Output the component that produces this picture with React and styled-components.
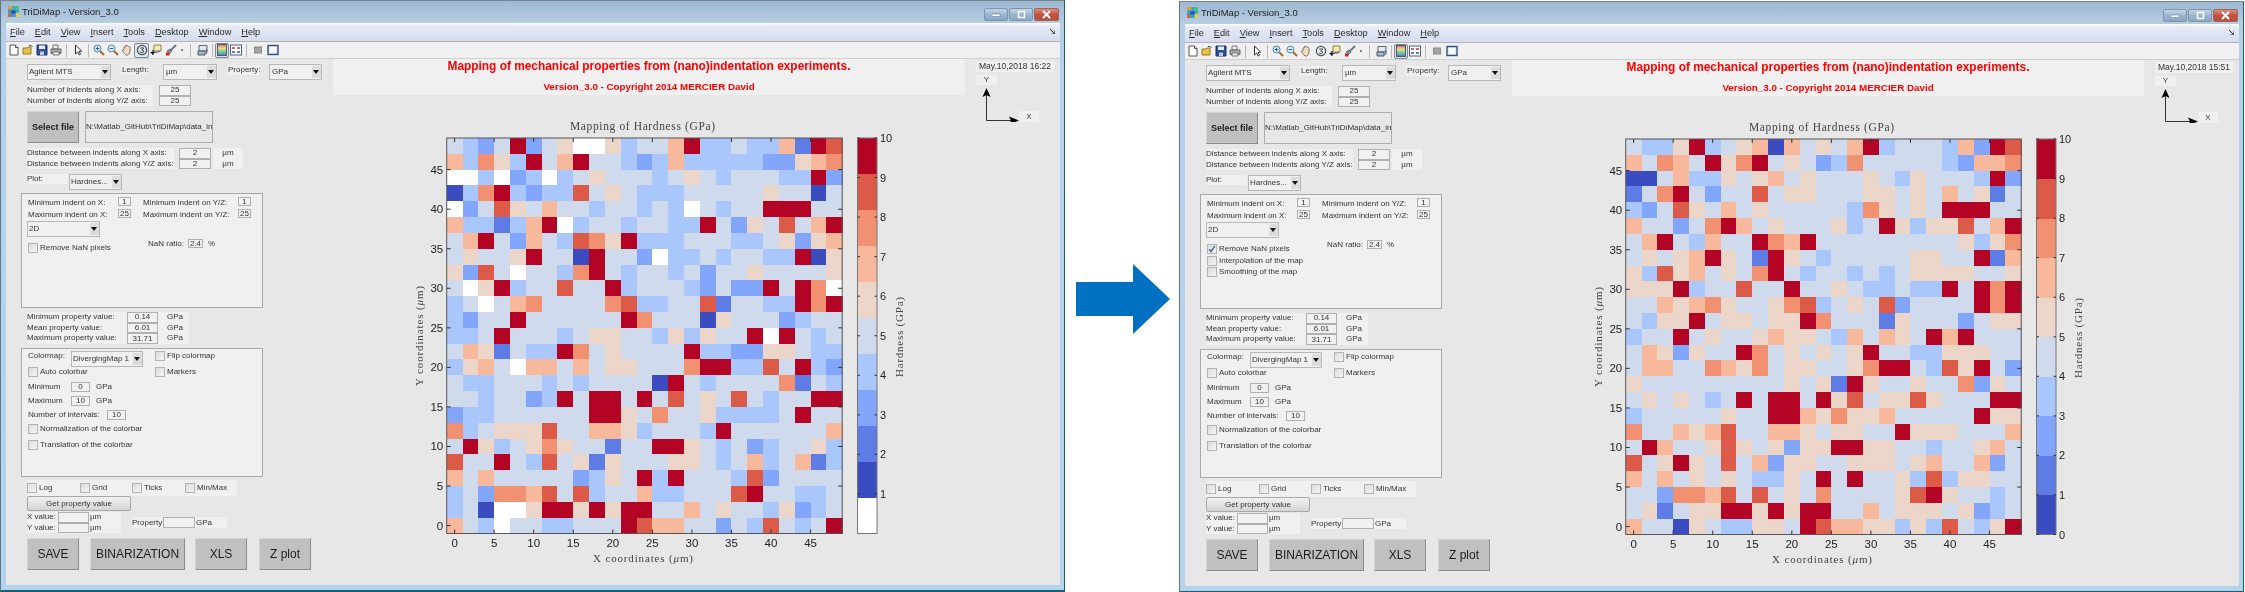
import React from "react";
import styled, { createGlobalStyle } from "styled-components";

const GlobalStyle = createGlobalStyle`
  html, body {
    margin: 0;
    padding: 0;
    height: 592px;
    overflow: hidden;
    background: #fff;
  }
  #root {
    height: 592px;
    overflow: hidden;
  }
`;

// colours of the hardness map, index = character in the rows below
const SWATCHES = [
  "#ffffff", "#3b4cc0", "#5d7ce6", "#82a6fb", "#aac7fd", "#d0daed",
  "#ecd5c9", "#f8b89c", "#f29072", "#dc5b48", "#b40426",
];

const MAP_BEFORE = [
  "5 4 3 5 a 3 5 6 0 0 6 4 5 5 7 a 4 4 5 4 4 7 2 a 9",
  "7 4 8 6 4 a 5 7 a 5 5 4 3 4 7 4 4 4 4 4 3 3 6 7 8",
  "0 0 4 0 3 4 0 4 5 6 5 5 5 4 5 6 5 4 5 5 5 4 4 a 3",
  "1 4 8 a 4 3 4 4 9 5 6 5 4 4 4 5 5 5 5 5 6 5 5 1 5",
  "0 3 5 9 6 5 7 5 5 4 5 5 4 5 4 0 5 4 5 5 a a a 5 5",
  "7 4 4 2 4 7 a 0 4 5 5 4 5 5 4 4 a 5 3 6 5 9 5 7 a",
  "5 7 a 5 3 7 5 4 9 8 6 a 4 4 4 5 5 5 4 4 5 6 3 6 7",
  "5 6 5 5 6 a 5 5 1 a 5 5 3 0 4 4 5 4 5 5 4 4 a 1 6",
  "6 3 9 5 0 5 5 4 8 a 5 4 5 5 4 5 3 5 5 6 5 5 5 5 6",
  "5 0 6 a 4 5 5 9 5 5 a 4 5 5 5 4 3 5 3 3 a 5 a 8 0",
  "4 5 0 5 7 8 5 5 5 5 8 9 4 4 5 5 9 2 5 5 4 4 a 8 a",
  "4 3 5 5 a 5 5 5 5 5 5 a 8 5 5 5 1 6 5 5 5 3 4 5 5",
  "4 4 5 a 5 5 5 4 5 6 6 5 5 4 6 4 6 5 5 a 0 a 5 4 5",
  "5 7 6 2 5 4 4 a 8 5 6 5 5 5 5 a 4 4 3 3 6 6 5 4 4",
  "4 6 7 5 0 7 7 5 7 5 6 6 5 5 5 8 a a 4 4 9 5 a 4 3",
  "5 4 4 5 5 5 4 5 4 5 5 5 5 1 a 5 4 5 5 5 5 8 2 5 4",
  "5 5 4 5 5 3 4 a 5 a a 5 a 5 9 5 6 5 9 5 4 5 5 a a",
  "3 4 4 5 5 5 5 5 5 a a 6 5 8 5 5 6 4 4 4 4 5 a 5 5",
  "8 4 5 6 6 6 9 5 5 7 7 6 4 5 5 5 4 a 5 5 5 5 5 5 7",
  "5 a 6 4 5 6 8 6 5 5 2 5 5 a a 6 5 4 5 3 4 5 5 6 4",
  "9 5 5 a 5 4 9 5 6 2 6 5 5 5 6 6 5 4 5 7 4 5 7 2 4",
  "7 5 7 5 5 5 5 5 3 4 6 5 a 4 a 5 5 5 4 9 3 5 5 5 5",
  "4 5 3 8 8 7 9 5 9 4 5 5 7 4 4 5 5 5 9 a 5 5 4 4 5",
  "4 5 1 0 0 6 a a 6 a 6 a a 5 5 7 5 6 5 5 4 6 3 4 5",
  "7 5 4 0 5 5 4 4 5 5 5 a 9 7 7 5 5 3 5 4 9 5 4 5 a",
];

const MAP_AFTER = [
  "5 4 4 6 a 4 5 6 7 1 7 5 6 5 7 a 4 5 5 5 4 7 3 a 9",
  "7 5 8 7 5 a 6 8 a 5 6 5 3 4 8 5 5 5 5 5 4 3 7 7 8",
  "1 1 5 7 4 4 6 5 6 7 5 6 5 5 5 6 5 4 6 5 5 5 4 a 3",
  "2 5 8 a 5 3 5 5 9 5 6 6 5 5 5 6 6 5 6 5 7 5 6 2 5",
  "4 3 5 9 6 5 7 5 6 5 5 5 5 5 4 8 6 5 6 5 a a a 5 5",
  "7 5 5 3 5 8 a 7 5 6 5 5 5 6 4 5 a 6 4 6 6 9 5 7 a",
  "5 7 a 5 4 7 5 5 a 8 7 a 5 5 5 5 5 5 5 5 5 6 4 6 8",
  "5 6 5 6 7 a 6 5 2 a 6 5 4 5 5 5 5 5 6 6 5 5 a 2 7",
  "6 4 9 6 7 5 6 5 8 a 5 4 5 5 4 5 4 5 6 6 6 6 5 5 6",
  "6 6 6 a 4 5 5 9 5 5 a 5 5 6 5 4 4 5 4 4 a 5 a 8 a",
  "5 5 7 6 7 8 6 5 5 6 8 9 4 5 6 5 9 3 5 5 5 5 a 8 a",
  "5 4 6 6 a 5 6 6 5 6 6 a 8 5 5 5 2 6 5 5 5 3 5 6 6",
  "4 5 5 a 5 6 5 5 6 7 6 6 5 4 7 5 7 6 5 a 7 a 5 5 5",
  "5 7 6 3 6 5 5 a 8 5 6 5 6 5 6 a 5 5 4 4 6 6 6 5 5",
  "5 7 7 5 5 8 7 6 8 5 6 6 5 5 6 8 a a 5 4 9 6 a 5 3",
  "6 5 5 5 5 5 5 5 5 5 6 5 6 2 a 6 5 5 6 5 5 8 3 6 5",
  "5 6 5 6 5 4 5 a 5 a a 5 a 6 9 5 6 6 9 6 5 5 5 a a",
  "4 5 5 5 5 5 6 5 5 a a 7 6 8 6 6 7 5 5 5 5 5 a 6 6",
  "8 5 5 7 6 7 9 5 5 7 7 6 5 6 6 5 5 a 6 6 6 5 5 5 7",
  "5 a 7 5 5 6 9 6 5 6 3 6 6 a a 6 6 5 5 4 5 5 6 7 5",
  "9 5 6 a 6 5 9 5 7 3 6 6 5 5 6 6 6 5 6 7 5 5 7 3 5",
  "7 5 7 5 6 5 6 5 4 4 6 5 a 5 a 5 5 6 4 9 4 6 6 5 5",
  "5 5 3 8 8 7 9 5 9 5 6 5 8 5 5 5 5 6 9 a 6 5 5 4 5",
  "5 6 2 5 6 6 a a 6 a 6 a a 5 5 7 5 6 6 6 5 6 3 4 5",
  "7 5 5 1 6 5 4 4 6 6 5 a 9 7 7 6 6 4 6 4 9 5 4 6 a",
];

const Page = styled.div`
  display: flex;
  align-items: flex-start;
  width: 2245px;
  height: 592px;
  overflow: hidden;
  font-family: "Liberation Sans", Arial, sans-serif;
`;

const Window = styled.div`
  flex: none;
  width: 1065px;
  height: 592px;
  box-sizing: border-box;
  margin-top: ${(p) => p.$top}px;
  display: flex;
  flex-direction: column;
  padding: 0 4px 5px 5px;
  border-top: 1px solid #77858f;
  border-left: 1px solid #5f7486;
  border-right: 1px solid #1d5c6c;
  border-bottom: 2px solid #17606e;
  background: linear-gradient(#9db8d2 0, #b7cde2 22px, #b4d0ec 60px, #b6d3ee 100%);
  filter: blur(0.3px);
`;

const TitleBar = styled.div`
  height: 21px;
  flex: none;
  display: flex;
  align-items: center;
  padding: 0 1px 1px 2px;
  font-size: 9.5px;
  color: #222;
`;

const AppIcon = styled.svg`
  width: 11px;
  height: 11px;
  margin-right: 3px;
`;

const WindowButtons = styled.div`
  display: flex;
  margin-left: auto;
  margin-top: 5px;
`;

const WindowButton = styled.div`
  width: ${(p) => (p.$close ? 25 : 24)}px;
  height: 13px;
  margin-left: 1px;
  box-sizing: border-box;
  border: 1px solid ${(p) => (p.$close ? "#a0645a" : "#7c95ad")};
  border-radius: 2px;
  display: flex;
  align-items: center;
  justify-content: center;
  background: ${(p) =>
    p.$close
      ? "linear-gradient(#dc8f7d, #c4513d 50%, #b9503f)"
      : "linear-gradient(#c3d5e6, #9db6cf 50%, #8aa7c4)"};
`;

const MenuBar = styled.div`
  height: 19px;
  flex: none;
  box-sizing: border-box;
  display: flex;
  align-items: center;
  gap: 10px;
  padding: 0 5px 1px 4px;
  border-bottom: 1px solid #b4b4b8;
  background: linear-gradient(#ffffff 0, #e6ebf6 3px, #d6dcee 100%);
  font-size: 9.2px;
  color: #2a2a2a;
`;

const MenuItem = styled.span`
  &::first-letter {
    text-decoration: underline;
  }
`;

const MenuCorner = styled.svg`
  width: 5px;
  height: 5px;
  margin-left: auto;
`;

const ToolBar = styled.div`
  height: 17px;
  flex: none;
  box-sizing: border-box;
  display: flex;
  align-items: center;
  padding-left: 1px;
  border-bottom: 1px solid #cfcfcf;
  background: #f0f0f0;
`;

const Tool = styled.div`
  width: ${(p) => p.$w || 14}px;
  height: 15px;
  flex: none;
  box-sizing: border-box;
  display: flex;
  align-items: center;
  justify-content: center;
  border: 1px solid ${(p) => (p.$on ? "#7c8894" : "transparent")};
  border-radius: 2px;
  background: ${(p) => (p.$on ? "#e2e6ea" : "transparent")};
`;

const ToolSep = styled.div`
  width: 1px;
  height: 13px;
  flex: none;
  margin: 0 ${(p) => p.$gap || 3}px;
  background: #b8b8b8;
`;

const Client = styled.div`
  flex: 1;
  min-height: 0;
  display: flex;
  overflow: hidden;
  background: #e7e7e7;
  color: #333;
  font-size: 8px;
  line-height: 10px;
`;

const ControlColumn = styled.div`
  flex: none;
  width: 327px;
  box-sizing: border-box;
  padding: 5px 0 0 15px;
`;

const Row = styled.div`
  display: flex;
  align-items: flex-start;
  margin-top: ${(p) => p.$mt || 0}px;
  margin-left: 6px;
`;

const Band = styled.div`
  flex: none;
  width: ${(p) => p.$w}px;
  height: ${(p) => p.$h || 10}px;
  margin-left: ${(p) => p.$ml || 0}px;
  margin-top: ${(p) => p.$mt || 0}px;
  padding-left: ${(p) => p.$pl || 0}px;
  box-sizing: border-box;
  background: #f0f0f0;
  white-space: nowrap;
  text-align: ${(p) => (p.$center ? "center" : "left")};
  line-height: ${(p) => p.$h || 10}px;
`;

const DateBand = styled(Band)`
  font-size: 8.5px;
`;

const CheckBand = styled(Band)`
  display: flex;
  align-items: center;
`;

const PropertyBand = styled(Band)`
  display: flex;
`;

const Plain = styled.div`
  flex: none;
  width: ${(p) => (p.$w ? `${p.$w}px` : "auto")};
  margin-left: ${(p) => p.$ml || 0}px;
  white-space: nowrap;
  line-height: ${(p) => p.$lh || 10}px;
`;

const Field = styled.div`
  flex: none;
  width: ${(p) => p.$w}px;
  height: ${(p) => p.$h || 10}px;
  margin-left: ${(p) => p.$ml || 0}px;
  box-sizing: border-box;
  border: 1px solid #b0b0b0;
  background: #f1f1f1;
  text-align: center;
  line-height: ${(p) => (p.$h || 10) - 2}px;
  color: #333;
`;

const Drop = styled.div`
  flex: none;
  width: ${(p) => p.$w}px;
  height: 16px;
  margin-left: ${(p) => p.$ml || 0}px;
  box-sizing: border-box;
  display: flex;
  align-items: center;
  padding-left: 1px;
  border: 1px solid #b8b8b8;
  background: #f0f0f0;
  color: #333;
  white-space: nowrap;
  overflow: hidden;
`;

const DropArrow = styled.span`
  margin-left: auto;
  width: 9px;
  height: 12px;
  flex: none;
  background: #dcdcdc;
  position: relative;
  &::after {
    content: "";
    position: absolute;
    left: 1px;
    top: 4px;
    border-left: 3.5px solid transparent;
    border-right: 3.5px solid transparent;
    border-top: 4px solid #111;
  }
`;

const RaisedButton = styled.div`
  flex: none;
  width: ${(p) => p.$w}px;
  height: 32px;
  margin-left: ${(p) => p.$ml || 0}px;
  box-sizing: border-box;
  display: flex;
  align-items: center;
  justify-content: center;
  background: #c0c0c0;
  border-top: 1px solid #d4d4d4;
  border-left: 1px solid #d4d4d4;
  border-right: 1px solid #8c8c8c;
  border-bottom: 1px solid #8c8c8c;
  color: #1c1c1c;
  font-size: ${(p) => (p.$bold ? 9 : 12)}px;
  font-weight: ${(p) => (p.$bold ? 700 : 400)};
  white-space: nowrap;
`;

const PathBox = styled.div`
  flex: none;
  width: 128px;
  height: 32px;
  margin-left: 6px;
  box-sizing: border-box;
  border: 1px solid #adadad;
  display: flex;
  align-items: center;
  overflow: hidden;
  white-space: nowrap;
  background: #e7e7e7;
`;

const Panel = styled.div`
  width: 242px;
  height: ${(p) => p.$h}px;
  margin-top: ${(p) => p.$mt}px;
  box-sizing: border-box;
  border: 1px solid #a8a8a8;
  background: #f0f0f0;
  padding: ${(p) => p.$pt}px 0 0 5px;
`;

const PanelRow = styled.div`
  display: flex;
  align-items: flex-start;
  margin-top: ${(p) => p.$mt || 0}px;
`;

const CheckColumn = styled.div`
  flex: none;
  width: 120px;
  margin-left: 1px;
  padding-top: 4px;
`;

const CheckLine = styled.div`
  display: flex;
  align-items: center;
  height: 10px;
  flex: none;
  width: ${(p) => (p.$w ? `${p.$w}px` : "auto")};
  margin-top: ${(p) => p.$mt || 0}px;
  margin-left: ${(p) => p.$ml || 0}px;
  white-space: nowrap;
`;

const CheckBox = styled.span`
  width: 10px;
  height: 10px;
  flex: none;
  box-sizing: border-box;
  margin-right: 2px;
  border: 1px solid #b3b3b3;
  background: linear-gradient(135deg, #dcdcdc, #f4f4f4);
  display: flex;
  align-items: center;
  justify-content: center;
`;

const SmallButton = styled.div`
  width: 104px;
  height: 15px;
  margin-left: 6px;
  box-sizing: border-box;
  border: 1px solid #a8a8a8;
  border-radius: 2px;
  background: linear-gradient(#f0f0f0, #e4e4e4 50%, #d4d4d4);
  text-align: center;
  line-height: 13px;
  color: #333;
`;

const StatBlock = styled.div`
  width: 162px;
  margin: 4px 0 0 6px;
  background: #f0f0f0;
`;

const StatLine = styled.div`
  display: flex;
  height: 10.5px;
`;

const ChartColumn = styled.div`
  flex: none;
  width: 632px;
`;

const ChartSvg = styled.svg`
  display: block;
`;

const Banner = styled.div`
  height: 36px;
  box-sizing: border-box;
  background: #f0f0f0;
  color: #ff0000;
  text-align: center;
  font-weight: 700;
`;

const BannerTitle = styled.div`
  font-size: 11.9px;
  line-height: 15px;
`;

const BannerSub = styled.div`
  font-size: 9.8px;
  line-height: 13px;
  margin-top: 6px;
`;

const Orientation = styled.div`
  flex: none;
  margin-left: 11px;
  padding-top: 2px;
`;

const AxisRow = styled.div`
  display: flex;
  align-items: flex-end;
  height: 37px;
`;

const ArrowSlot = styled.div`
  flex: none;
  width: 114px;
  padding: 264px 0 0 11px;
  box-sizing: border-box;
`;

const BigArrow = styled.svg`
  display: block;
  width: 94px;
  height: 70px;
`;

function Check({ on, children, ...rest }) {
  return (
    <CheckLine {...rest}>
      <CheckBox>
        {on && (
          <svg width="8" height="8" viewBox="0 0 8 8">
            <path d="M1.2 4.2 L3 6.6 L6.8 1" fill="none" stroke="#3a4f8c" strokeWidth="1.3" />
          </svg>
        )}
      </CheckBox>
      {children}
    </CheckLine>
  );
}

function Dropdown({ w, ml, children }) {
  return (
    <Drop $w={w} $ml={ml}>
      {children}
      <DropArrow />
    </Drop>
  );
}

// 16x16-ish MATLAB figure toolbar glyphs
function ToolGlyph({ name }) {
  const size = { width: 12, height: 12, viewBox: "0 0 12 12" };
  switch (name) {
    case "new":
      return (
        <svg {...size}>
          <path d="M2 1 H7.5 L10 3.5 V11 H2 Z" fill="#fff" stroke="#555" />
          <path d="M7.5 1 V3.5 H10" fill="#dde" stroke="#555" />
        </svg>
      );
    case "open":
      return (
        <svg {...size}>
          <path d="M1 4 H5 L6 3 H9 V10 H1 Z" fill="#e8c050" stroke="#9a7a20" />
          <path d="M7 1.5 Q9.5 .5 10.5 3" fill="none" stroke="#345a9a" />
        </svg>
      );
    case "save":
      return (
        <svg {...size}>
          <path d="M1 1 H11 V11 H1 Z" fill="#2a4f9e" stroke="#1c3570" />
          <path d="M3 1.5 H9 V5 H3 Z" fill="#e6ecf5" />
          <path d="M4 7.5 H8 V11 H4 Z" fill="#c7c7c7" />
        </svg>
      );
    case "print":
      return (
        <svg {...size}>
          <path d="M3 1 H8 V5 H3 Z" fill="#eee" stroke="#777" />
          <path d="M1 5 H11 V9.5 H1 Z" fill="#a8a8a8" stroke="#666" />
          <path d="M3 8 H9 V11 H3 Z" fill="#f0f0f0" stroke="#777" />
        </svg>
      );
    case "pointer":
      return (
        <svg {...size}>
          <path d="M3.5 1 L3.5 10 L5.6 8 L7.2 11 L8.6 10.2 L7 7.4 L9.8 7.2 Z" fill="#fff" stroke="#333" />
        </svg>
      );
    case "zoomin":
    case "zoomout":
      return (
        <svg {...size}>
          <path d="M7 7 L11 11" stroke="#a06a20" strokeWidth="2" />
          <circle cx="4.5" cy="4.5" r="3.5" fill="#d8ecfb" stroke="#5c7f9f" />
          <path d={name === "zoomin" ? "M2.7 4.5 H6.3 M4.5 2.7 V6.3" : "M2.7 4.5 H6.3"} stroke="#2a5a9a" />
        </svg>
      );
    case "hand":
      return (
        <svg {...size}>
          <path d="M3 6 V3 Q3.8 2 4.5 3 V1.6 Q5.4 .8 6 1.8 V1.9 Q7 1.3 7.5 2.4 Q8.6 2.2 9 3.2 V7 Q9 10 6.8 11 H5 Q3.6 10 1.2 6.5 Q1.8 5.4 3 6 Z" fill="#f4dcc4" stroke="#66554a" strokeWidth=".8" />
        </svg>
      );
    case "rotate":
      return (
        <svg {...size}>
          <circle cx="6" cy="6" r="4.6" fill="none" stroke="#45505c" strokeWidth="1.3" />
          <path d="M4 4 H8 L5.6 6 Q8.4 6 7.6 8 Q6 9.4 3.8 8" fill="none" stroke="#45505c" />
        </svg>
      );
    case "cursor":
      return (
        <svg {...size}>
          <path d="M4 1 H11 V7 H4 Z" fill="#f4ebb0" stroke="#8a8040" />
          <path d="M1 8 L3 10 M3 6 V11 M.5 8.5 H5.5" stroke="#111" strokeWidth="1.2" />
          <path d="M5.5 8 Q8 9 10 7" fill="none" stroke="#3a50b0" />
        </svg>
      );
    case "brush":
      return (
        <svg {...size}>
          <path d="M11 1 L5.5 6.5" stroke="#6a7a8a" strokeWidth="2" />
          <path d="M2 7 L5 5 L7 7 L4 10 Z" fill="#8a8f99" stroke="#444" strokeWidth=".6" />
          <rect x="1" y="8.5" width="3.4" height="3" fill="#e01818" />
        </svg>
      );
    case "dropdown":
      return (
        <svg width="5" height="12" viewBox="0 0 5 12">
          <path d="M1 5.5 H4 L2.5 7.5 Z" fill="#222" />
        </svg>
      );
    case "linked":
      return (
        <svg {...size}>
          <path d="M2 1.5 H10 V7 H2 Z" fill="#e6eaef" stroke="#55667a" />
          <path d="M1 7 H8 V11 H1 Z" fill="#a9b8c9" stroke="#47586c" />
          <path d="M9 5 Q11.5 7.5 9 10" fill="none" stroke="#47586c" />
        </svg>
      );
    case "colorbar":
      return (
        <svg width="10" height="12" viewBox="0 0 10 12">
          <defs>
            <linearGradient id="cb" x1="0" y1="0" x2="0" y2="1">
              <stop offset="0" stopColor="#d06a9a" />
              <stop offset=".35" stopColor="#f2e070" />
              <stop offset=".65" stopColor="#70d0a0" />
              <stop offset="1" stopColor="#4a70d8" />
            </linearGradient>
          </defs>
          <rect x=".5" y=".5" width="9" height="11" fill="url(#cb)" stroke="#556" />
        </svg>
      );
    case "legend":
      return (
        <svg {...size}>
          <rect x=".5" y="1" width="11" height="10" fill="#fff" stroke="#506080" />
          <path d="M2 4 H5 M7 4 H10" stroke="#d03030" strokeWidth="1.6" />
          <path d="M2 8 H5 M7 8 H10" stroke="#3050b0" strokeWidth="1.6" />
        </svg>
      );
    case "hide":
      return (
        <svg {...size}>
          <rect x="2.5" y="3" width="7" height="6" fill="#a4a4a4" stroke="#8a8a8a" />
        </svg>
      );
    default:
      return (
        <svg {...size}>
          <rect x="1" y="1.5" width="10" height="9" fill="#dfe7f2" stroke="#35507c" strokeWidth="1.4" />
          <rect x="3" y="3" width="6" height="5.5" fill="#fff" />
        </svg>
      );
  }
}

function FigureToolbar({ rotateOn }) {
  const g = (name, props = {}) => (
    <Tool key={name} {...props}>
      <ToolGlyph name={name} />
    </Tool>
  );
  return (
    <ToolBar>
      {g("new")}
      {g("open")}
      {g("save")}
      {g("print")}
      <ToolSep />
      {g("pointer", { $w: 15 })}
      <ToolSep />
      {g("zoomin")}
      {g("zoomout")}
      {g("hand")}
      {g("rotate", { $on: rotateOn, $w: 15 })}
      {g("cursor")}
      {g("brush", { $w: 16 })}
      {g("dropdown", { $w: 6 })}
      <ToolSep $gap={5} />
      {g("linked")}
      <ToolSep $gap={2} />
      {g("colorbar", { $on: true })}
      {g("legend")}
      <ToolSep />
      {g("hide", { $w: 16 })}
      {g("plottools", { $w: 14 })}
    </ToolBar>
  );
}

const PLOT = { x: 113.7, y: 43, size: 395.5 };
const BAR = { x: 524.5, w: 19.5 };

function HardnessChart({ rows, levels }) {
  const cell = PLOT.size / 25;
  const ticks = [0, 5, 10, 15, 20, 25, 30, 35, 40, 45];
  const right = PLOT.x + PLOT.size;
  const bottom = PLOT.y + PLOT.size;
  const xAt = (v) => PLOT.x + cell / 2 + (v / 2) * cell;
  const yAt = (v) => bottom - cell / 2 - (v / 2) * cell;
  const barStep = PLOT.size / levels.length;
  const labelStep = PLOT.size / 10;

  return (
    <ChartSvg width="632" height="491">
      <text x="309.5" y="35" textAnchor="middle" fontFamily="Liberation Serif" fontSize="11.5" fill="#444" textLength="145">
        Mapping of Hardness (GPa)
      </text>

      <g shapeRendering="crispEdges">
        {rows.map((row, r) =>
          row.split(" ").map((c, i) => (
            <rect
              key={`${r}-${i}`}
              x={PLOT.x + i * cell}
              y={PLOT.y + r * cell}
              width={cell + 0.5}
              height={cell + 0.5}
              fill={SWATCHES[parseInt(c, 16)]}
            />
          ))
        )}
      </g>
      <rect x={PLOT.x} y={PLOT.y} width={PLOT.size} height={PLOT.size} fill="none" stroke="#555" strokeWidth="1" />
      {ticks.map((t) => (
        <g key={t} stroke="#333" strokeWidth="1">
          <path d={`M${xAt(t)} ${bottom} v-4 M${xAt(t)} ${PLOT.y} v4`} />
          <path d={`M${PLOT.x} ${yAt(t)} h4 M${right} ${yAt(t)} h-4`} />
        </g>
      ))}
      {ticks.map((t) => (
        <g key={t} fontFamily="Liberation Sans" fontSize="11.5" fill="#222">
          <text x={xAt(t)} y={bottom + 13.5} textAnchor="middle">{t}</text>
          <text x={PLOT.x - 3.5} y={yAt(t) + 4} textAnchor="end">{t}</text>
        </g>
      ))}
      <text x="310" y="467" textAnchor="middle" fontFamily="Liberation Serif" fontSize="11" fill="#444" textLength="100">
        X coordinates (<tspan fontStyle="italic">μ</tspan>m)
      </text>
      <text transform="translate(90 241) rotate(-90)" textAnchor="middle" fontFamily="Liberation Serif" fontSize="11" fill="#444" textLength="100">
        Y coordinates (<tspan fontStyle="italic">μ</tspan>m)
      </text>

      <g shapeRendering="crispEdges">
        {levels.map((lvl, i) => (
          <rect
            key={lvl}
            x={BAR.x}
            y={PLOT.y + (levels.length - 1 - i) * barStep}
            width={BAR.w}
            height={barStep + 0.5}
            fill={SWATCHES[lvl]}
          />
        ))}
      </g>
      <rect x={BAR.x} y={PLOT.y} width={BAR.w} height={PLOT.size} fill="none" stroke="#777" strokeWidth="1" />
      {[10, 9, 8, 7, 6, 5, 4, 3, 2, 1, 0].map((v, i) => {
        const y = PLOT.y + i * labelStep;
        if (v === 0 && levels.length > 10) return null;
        return (
          <g key={v}>
            <path d={`M${BAR.x} ${y} h2.5 M${BAR.x + BAR.w} ${y} h-2.5`} stroke="#333" />
            <text x={BAR.x + BAR.w + 3} y={y + 4} fontFamily="Liberation Sans" fontSize="11" fill="#222">{v}</text>
          </g>
        );
      })}
      <text transform="translate(570 242) rotate(-90)" textAnchor="middle" fontFamily="Liberation Serif" fontSize="11" fill="#444" textLength="80">
        Hardness (GPa)
      </text>
    </ChartSvg>
  );
}

function Controls({ nanChecked, extraChecks }) {
  return (
    <ControlColumn>
      <Row>
        <Dropdown w={84}>Agilent MTS</Dropdown>
        <Band $w={27} $ml={10} $mt={1} $pl={1}>Length:</Band>
        <Dropdown w={54} ml={15}><Plain $ml={1}>µm</Plain></Dropdown>
        <Band $w={33} $ml={10} $mt={1} $pl={1}>Property:</Band>
        <Dropdown w={53} ml={9}><Plain $ml={1}>GPa</Plain></Dropdown>
      </Row>

      <Row $mt={5}>
        <Band $w={126} $h={10.5}>Number of indents along X axis:</Band>
        <Field $w={32} $ml={6} $h={10.5}>25</Field>
      </Row>
      <Row>
        <Band $w={126} $h={10.5}>Number of indents along Y/Z axis:</Band>
        <Field $w={32} $ml={6} $h={10.5}>25</Field>
      </Row>

      <Row $mt={5}>
        <RaisedButton $w={52} $bold>Select file</RaisedButton>
        <PathBox>N:\Matlab_GitHub\TriDiMap\data_ind</PathBox>
      </Row>

      <Row $mt={5}>
        <Band $w={147} $h={10.5}>Distance between indents along X axis:</Band>
        <Field $w={32} $ml={5} $h={10.5}>2</Field>
        <Band $w={30} $ml={2} $h={10.5} $center>µm</Band>
      </Row>
      <Row>
        <Band $w={147} $h={10.5}>Distance between indents along Y/Z axis:</Band>
        <Field $w={32} $ml={5} $h={10.5}>2</Field>
        <Band $w={30} $ml={2} $h={10.5} $center>µm</Band>
      </Row>

      <Row $mt={5}>
        <Band $w={41}>Plot:</Band>
        <Dropdown w={53} ml={1}>Hardnes...</Dropdown>
      </Row>

      <Panel $h={115} $mt={3} $pt={3}>
        <PanelRow>
          <Plain $w={90} $ml={1} $lh={11}>Minimum indent on X:</Plain>
          <Field $w={13} $h={9}>1</Field>
          <Plain $w={95} $ml={12} $lh={11}>Minimum indent on Y/Z:</Plain>
          <Field $w={13} $h={9}>1</Field>
        </PanelRow>
        <PanelRow $mt={1}>
          <Plain $w={90} $ml={1} $lh={11}>Maximum indent on X:</Plain>
          <Field $w={13} $h={9}>25</Field>
          <Plain $w={95} $ml={12} $lh={11}>Maximum indent on Y/Z:</Plain>
          <Field $w={13} $h={9}>25</Field>
        </PanelRow>
        <PanelRow $mt={1}>
          <Dropdown w={73}>2D</Dropdown>
        </PanelRow>
        <PanelRow $mt={2}>
          <CheckColumn>
            <Check on={nanChecked}>Remove NaN pixels</Check>
            {extraChecks && <Check $mt={1.5}>Interpolation of the map</Check>}
            {extraChecks && <Check $mt={1}>Smoothing of the map</Check>}
          </CheckColumn>
          <Plain $w={40}>NaN ratio:</Plain>
          <Field $w={15} $h={9}>2.4</Field>
          <Plain $ml={5}>%</Plain>
        </PanelRow>
      </Panel>

      <StatBlock>
        <StatLine>
          <Plain $w={100}>Minimum property value:</Plain>
          <Field $w={31} $h={10.5}>0.14</Field>
          <Plain $ml={9}>GPa</Plain>
        </StatLine>
        <StatLine>
          <Plain $w={100}>Mean property value:</Plain>
          <Field $w={31} $h={10.5}>6.01</Field>
          <Plain $ml={9}>GPa</Plain>
        </StatLine>
        <StatLine>
          <Plain $w={100}>Maximum property value:</Plain>
          <Field $w={31} $h={11}>31.71</Field>
          <Plain $ml={9}>GPa</Plain>
        </StatLine>
      </StatBlock>

      <Panel $h={129} $mt={4.5} $pt={2}>
        <PanelRow>
          <Plain $w={43} $ml={1}>Colormap:</Plain>
          <Dropdown w={72}>DivergingMap 1</Dropdown>
          <Check $ml={12}>Flip colormap</Check>
        </PanelRow>
        <PanelRow>
          <Check $w={127} $ml={1}>Auto colorbar</Check>
          <Check>Markers</Check>
        </PanelRow>
        <PanelRow $mt={5}>
          <Plain $w={43} $ml={1}>Minimum</Plain>
          <Field $w={19}>0</Field>
          <Plain $ml={6}>GPa</Plain>
        </PanelRow>
        <PanelRow $mt={4}>
          <Plain $w={43} $ml={1}>Maximum</Plain>
          <Field $w={19}>10</Field>
          <Plain $ml={6}>GPa</Plain>
        </PanelRow>
        <PanelRow $mt={4}>
          <Plain $w={79} $ml={1}>Number of intervals:</Plain>
          <Field $w={19}>10</Field>
        </PanelRow>
        <Check $mt={4} $ml={1}>Normalization of the colorbar</Check>
        <Check $mt={6} $ml={1}>Translation of the colorbar</Check>
      </Panel>

      <Row $mt={3}>
        <CheckBand $w={210} $h={16}>
          <Check $w={53}>Log</Check>
          <Check $w={52}>Grid</Check>
          <Check $w={53}>Ticks</Check>
          <Check>Min/Max</Check>
        </CheckBand>
      </Row>
      <SmallButton>Get property value</SmallButton>
      <Row $mt={1}>
        <Band $w={94} $h={21}>
          <StatLine>
            <Plain $w={31}>X value:</Plain>
            <Field $w={31} $h={10.5} />
            <Plain $ml={1}>µm</Plain>
          </StatLine>
          <StatLine>
            <Plain $w={31}>Y value:</Plain>
            <Field $w={31} $h={10.5} />
            <Plain $ml={1}>µm</Plain>
          </StatLine>
        </Band>
        <PropertyBand $w={95} $h={11} $ml={11} $mt={5}>
          <Plain $w={31} $lh={11}>Property</Plain>
          <Field $w={32} $h={11} />
          <Plain $ml={1} $lh={11}>GPa</Plain>
        </PropertyBand>
      </Row>
      <Row $mt={5}>
        <RaisedButton $w={52}>SAVE</RaisedButton>
        <RaisedButton $w={95} $ml={11}>BINARIZATION</RaisedButton>
        <RaisedButton $w={52} $ml={10}>XLS</RaisedButton>
        <RaisedButton $w={52} $ml={12}>Z plot</RaisedButton>
      </Row>
    </ControlColumn>
  );
}

function TriDiWindow({ top, date, rows, levels, rotateOn, nanChecked, extraChecks }) {
  return (
    <Window $top={top}>
      <TitleBar>
        <AppIcon viewBox="0 0 10 10">
          <rect width="10" height="10" fill="#3aa0c8" />
          <rect x="0" y="0" width="4" height="3" fill="#e8a030" />
          <rect x="6" y="0" width="4" height="4" fill="#40c090" />
          <rect x="3" y="4" width="4" height="3" fill="#2050c0" />
          <rect x="0" y="7" width="3" height="3" fill="#e06040" />
          <rect x="7" y="6" width="3" height="4" fill="#e8d040" />
        </AppIcon>
        TriDiMap - Version_3.0
        <WindowButtons>
          <WindowButton>
            <svg width="9" height="5"><rect y="2" width="8" height="2.5" fill="#fff" stroke="#56708a" strokeWidth=".5" /></svg>
          </WindowButton>
          <WindowButton>
            <svg width="9" height="9"><rect x="1.5" y="1.5" width="6" height="6" fill="none" stroke="#fff" strokeWidth="1.5" /></svg>
          </WindowButton>
          <WindowButton $close>
            <svg width="9" height="9"><path d="M1 1 L8 8 M8 1 L1 8" stroke="#fff" strokeWidth="2" /></svg>
          </WindowButton>
        </WindowButtons>
      </TitleBar>
      <MenuBar>
        {["File", "Edit", "View", "Insert", "Tools", "Desktop", "Window", "Help"].map((m) => (
          <MenuItem key={m}>{m}</MenuItem>
        ))}
        <MenuCorner viewBox="0 0 5 5">
          <path d="M0 0 L5 5 M5 1.5 V5 H1.5" stroke="#222" fill="none" />
        </MenuCorner>
      </MenuBar>
      <FigureToolbar rotateOn={rotateOn} />
      <Client>
        <Controls nanChecked={nanChecked} extraChecks={extraChecks} />
        <ChartColumn>
          <Banner>
            <BannerTitle>Mapping of mechanical properties from (nano)indentation experiments.</BannerTitle>
            <BannerSub>Version_3.0 - Copyright 2014 MERCIER David</BannerSub>
          </Banner>
          <HardnessChart rows={rows} levels={levels} />
        </ChartColumn>
        <Orientation>
          <DateBand $w={78} $h={11} $center>{date}</DateBand>
          <Band $w={21} $h={10} $mt={3} $center>Y</Band>
          <AxisRow>
            <svg width="43" height="34" viewBox="0 0 43 34">
              <path d="M10.5 6 V32.5 H36" fill="none" stroke="#333" />
              <path d="M10.5 0 L14.5 9 L10.5 7 L6.5 9 Z M43 32.5 L33 28.5 L35 32.5 L33 36.5 Z" fill="#000" />
            </svg>
            <Band $w={20} $h={11} $center>X</Band>
          </AxisRow>
        </Orientation>
      </Client>
    </Window>
  );
}

export default function App() {
  return (
    <Page>
      <GlobalStyle />
      <TriDiWindow
        top={0}
        date="May.10,2018 16:22"
        rows={MAP_BEFORE}
        levels={[0, 1, 2, 3, 4, 5, 6, 7, 8, 9, 10]}
        rotateOn
      />
      <ArrowSlot>
        <BigArrow viewBox="0 0 94 70">
          <path d="M0 18 H57 V0 L94 35 L57 70 V52 H0 Z" fill="#0070c0" />
        </BigArrow>
      </ArrowSlot>
      <TriDiWindow
        top={1}
        date="May.10,2018 15:51"
        rows={MAP_AFTER}
        levels={[1, 2, 3, 4, 5, 6, 7, 8, 9, 10]}
        nanChecked
        extraChecks
      />
    </Page>
  );
}
